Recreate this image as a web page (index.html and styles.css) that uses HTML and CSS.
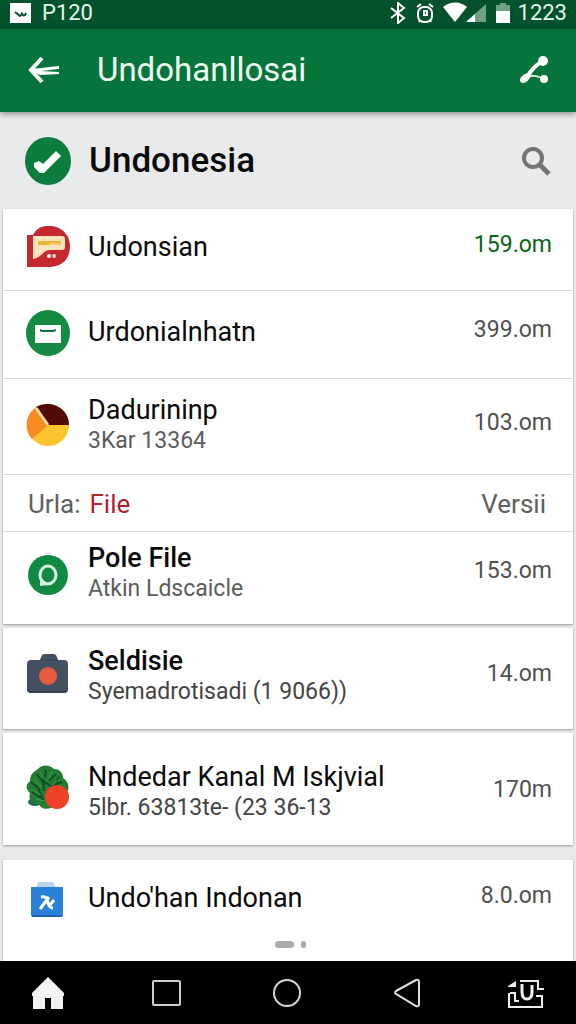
FILE: index.html
```html
<!DOCTYPE html>
<html lang="id">
<head>
<meta charset="utf-8">
<meta name="viewport" content="width=device-width, initial-scale=1">
<title>Undohanllosai</title>
<link rel="stylesheet" href="styles.css">
</head>
<body>
<div class="status">
  <svg class="status-app" viewBox="0 0 21 20" width="21" height="20"><path fill="#fff" d="M0 0h21v20H0z"/><path d="M5 9l5 4 2-2M11 10c2 0 1 4 4 2l1-2" fill="none" stroke="#064d2a" stroke-width="2"/></svg>
  <span class="status-left">P120</span>
  <span class="status-icons">
    <svg viewBox="0 0 16 22" width="16" height="22"><path d="M1 6l13 10-6 5V1l6 5L1 16" fill="none" stroke="#fff" stroke-width="2"/></svg>
    <svg class="alarm" viewBox="0 0 20 22" width="20" height="22"><g fill="none" stroke="#fff" stroke-width="2"><rect x="3" y="5" width="14" height="15" rx="6"/><path d="M2 5l4-3M18 5l-4-3M9 9h3v4H9zM5 18l-1 2M15 18l1 2"/></g></svg>
    <svg viewBox="0 0 45 22" width="45" height="22"><path fill="#fff" d="M1 5c7-6 17-6 24 0L13 20z"/><path fill="#70a080" d="M44 2v18H24z"/><path fill="#fff" d="M33 12v8h-9z"/></svg>
    <svg class="battery" viewBox="0 0 14 20" width="14" height="20"><path fill="#70a080" d="M4 0h6v2h4v6H0V2h4z"/><path fill="#fff" d="M0 8h14v12H0z"/></svg>
  </span>
  <time class="status-time">1223</time>
</div>
<header class="appbar">
  <button class="icon-btn" aria-label="Kembali"><svg viewBox="0 0 34 28" width="34" height="28"><path d="M15 2L4 14l11 12" fill="none" stroke="#fff" stroke-width="4"/><path d="M5 13l27-3v3l-18 2 18 1v2l-19 1-8-4z" fill="#fff"/></svg></button>
  <h1 class="appbar-title">Undohanllosai</h1>
  <button class="icon-btn" aria-label="Bagikan"><svg viewBox="0 0 30 28" width="30" height="28"><path d="M24 5C17 9 12 14 9 20" fill="none" stroke="#fff" stroke-width="4"/><path d="M6 22c6-4 12-2 19 1" fill="none" stroke="#d8efe0" stroke-width="2"/><circle cx="24" cy="5" r="5" fill="#fff"/><circle cx="25" cy="23" r="4" fill="#fff"/><path d="M1 25c-1-3 4-8 9-8l2 3c-2 4-5 7-8 7-2 0-2-1-3-2z" fill="#fff"/></svg></button>
</header>
<section class="heading">
  <svg class="icon" viewBox="0 0 48 48"><ellipse cx="24" cy="24" rx="23" ry="24" fill="#0d7d3d"/><path d="M10 26l5-2 4 3 13-13 5 5-17 17-4 0-6-6z" fill="#fff"/></svg>
  <h2 class="heading-title">Undonesia</h2>
  <button class="icon-btn" aria-label="Cari"><svg viewBox="0 0 30 30" width="30" height="30"><circle cx="12" cy="12" r="9" fill="none" stroke="#757575" stroke-width="4"/><path d="M18 18l10 10" stroke="#757575" stroke-width="5"/></svg></button>
</section>
<main class="list">
  <div class="card">
    <article class="row row-first">
      <svg class="icon" viewBox="0 0 48 48"><path d="M3 12h6c4-8 10-9 16-9 12 0 21 8 21 20 0 13-8 21-21 21H3z" fill="#c62830"/><path d="M9 13h29q3 0 3 3v8q0 3-3 3H26c-7 0-8 8-17 9z" fill="#fbe3bc"/><path d="M14 18h23l-1 4H14z" fill="#ecb431"/><path d="M25 21h10" stroke="#f5cf78" stroke-width="2"/><circle cx="25" cy="33" r="2" fill="#fff"/><circle cx="30" cy="33" r="2" fill="#f3d5d5"/></svg>
      <h3 class="title">Uıdonsian</h3><span class="value value-green">159.om</span>
    </article>
    <article class="row row-second">
      <svg class="icon" viewBox="0 0 48 48"><ellipse cx="24" cy="25" rx="22" ry="23" fill="#158a43"/><path d="M11 17h26v18H11z" fill="#fff"/><path d="M16 22l2 1h11l3-1" fill="none" stroke="#15713a" stroke-width="2"/></svg>
      <h3 class="title">Urdonialnhatn</h3><span class="value">399.om</span>
    </article>
    <article class="row row-chart">
      <svg class="icon" viewBox="0 0 48 48"><circle cx="24" cy="24" r="21" fill="#fcc42c"/><path d="M24 24L8 38C-2 27 3 11 13 6z" fill="#f58c20"/><path d="M24 24L12 6C25-2 45 6 45 24z" fill="#500a0c"/><path d="M24 24L12 7" stroke="#ffd8a0" stroke-width="3"/></svg>
      <div class="text"><h3 class="title">Dadurininp</h3><p class="sub">3Kar 13364</p></div><span class="value">103.om</span>
    </article>
    <div class="section"><span class="section-label">Urla:</span><a class="section-link" href="#file">File</a><span>Versii</span></div>
    <article class="row row-file" id="file">
      <svg class="icon" viewBox="0 0 48 48"><circle cx="24" cy="26" r="20" fill="#108a43"/><ellipse cx="24" cy="26" rx="8" ry="9" fill="none" stroke="#d9f3e2" stroke-width="3"/><path d="M16 27v10l7-1z" fill="#d9f3e2"/></svg>
      <div class="text"><h3 class="title title-strong">Pole File</h3><p class="sub">Atkin Ldscaicle</p></div><span class="value">153.om</span>
    </article>
  </div>
  <article class="card row row-camera">
    <svg class="icon" viewBox="0 0 48 48"><path d="M3 12q0-4 4-4h9l2-5q1-1 3-1h8q2 0 3 1l2 5h6q4 0 4 4v25q0 4-4 4H7q-4 0-4-4z" fill="#435061"/><path d="M16 8h18" stroke="#323e4e" stroke-width="1"/><path d="M4 37q0 3 4 3h31q4 0 4-3" fill="none" stroke="#354151" stroke-width="2"/><circle cx="24" cy="24" r="9" fill="#e85c40"/></svg>
    <div class="text"><h3 class="title title-strong">Seldisie</h3><p class="sub sub-dark">Syemadrotisadi (1 9066))</p></div><span class="value">14.om</span>
  </article>
  <article class="card row row-plant">
    <svg class="icon icon-plant" viewBox="0 3 48 48"><ellipse cx="11" cy="37" rx="7" ry="4" fill="#22674f"/><path d="M14 4c5-5 12-4 16 0 6 0 9 4 9 9 7 4 7 13 2 17L27 43c-6 2-11 0-12-4-8 0-11-5-9-11-5-4-4-9 0-12 0-6 3-9 8-12z" fill="#247c35"/><g fill="none" stroke="#125126" stroke-width="2"><path d="M13 9l8 11M22 5l-2 11 8 6M32 9l-7 7M7 17l9 8M38 17l-10 4M8 27l9 6M15 25l5 12M19 18l1 8M35 12l-5 10"/></g><g fill="none" stroke="#43a148" stroke-width="1"><path d="M16 7l7 10M28 6l-3 7M9 14l9 8M36 14l-8 6M7 24l10 6M12 34l9 2"/></g><circle cx="33" cy="32" r="12" fill="#ee4329"/></svg>
    <div class="text"><h3 class="title">Nndedar Kanal M Iskjvial</h3><p class="sub sub-dark">5lbr. 63813te- (23 36-13</p></div><span class="value">170m</span>
  </article>
  <div class="card card-last">
    <article class="row row-last">
      <svg class="icon" viewBox="0 0 48 48"><path d="M12 14l2-6h15l3 6z" fill="#b9d4ec"/><path d="M7 13h32v28q0 2-2 2H9q-2 0-2-2z" fill="#2b80d8"/><path d="M8 42h30" stroke="#1b62b4" stroke-width="2"/><path d="M17 23c6-1 6 2 7 6s2 5 5 5M25 23l-9 12M30 26l-4 5" fill="none" stroke="#fff" stroke-width="3"/></svg>
      <h3 class="title">Undo'han Indonan</h3><span class="value">8.0.om</span>
    </article>
    <div class="pager" aria-hidden="true"><i class="pill"></i><i class="dot"></i></div>
  </div>
</main>
<nav class="nav">
  <button class="icon-btn" aria-label="Beranda"><svg viewBox="0 0 34 34" width="34" height="34"><path fill="#f2f2f2" d="M17 1l16 16v3h-1v13H20V22h-6v11H2V20H1v-3z"/></svg></button>
  <button class="icon-btn" aria-label="Terbaru"><svg viewBox="0 0 34 34" width="34" height="34"><rect x="3" y="5" width="27" height="24" rx="1" fill="none" stroke="#ccc" stroke-width="2"/></svg></button>
  <button class="icon-btn" aria-label="Layar utama"><svg viewBox="0 0 34 34" width="34" height="34"><circle cx="18" cy="17" r="13" fill="none" stroke="#d5d5d5" stroke-width="2"/></svg></button>
  <button class="icon-btn" aria-label="Mundur"><svg viewBox="0 0 34 34" width="34" height="34"><path d="M8 15L28 4q3-1 3 2v22q0 3-3 2L8 18q-2-1 0-3z" fill="none" stroke="#e0e0e0" stroke-width="2"/></svg></button>
  <button class="icon-btn" aria-label="Papan ketik"><svg viewBox="0 0 38 34" width="38" height="34"><g fill="none" stroke="#eee" stroke-width="2"><path d="M13 5h18v8h6M2 17v14h33V20h-6M3 17h5v8h4M31 13h6"/><path d="M15 8v8q0 7 5 7t5-7V9" stroke-width="3"/></g><path fill="#eee" d="M1 10l8-5v6H1z"/></svg></button>
</nav>
</body>
</html>
```

FILE: styles.css
```css
* { box-sizing: border-box; }
body {
  margin: 0;
  min-height: 100vh;
  display: flex;
  flex-direction: column;
  background: #e9eaec;
  color: #0a0a0a;
  font-family: Roboto, "Liberation Sans", sans-serif;
}
h1, h2, h3, p { margin: 0; font-weight: 400; }
svg { display: block; flex: none; }
.icon-btn { display: flex; padding: 0; border: 0; background: none; }

.status {
  display: flex;
  align-items: center;
  padding: 0 9px 4px 10px;
  background: #04522b;
  color: #e3f5e9;
  font-size: 22px;
  line-height: 25px;
}
.status-left { margin-left: 11px; }
.status-icons { display: flex; align-items: center; margin-left: auto; }
.alarm { margin: 0 7px 0 9px; }
.battery { margin: 0 8px 0 9px; }

.appbar {
  position: relative;
  display: flex;
  align-items: center;
  padding: 20px 27px 21px;
  background: #07743b;
  color: #effff4;
  box-shadow: 0 2px 6px rgba(0, 0, 0, 0.4);
}
.appbar-title { flex: 1; margin-left: 36px; font-size: 33px; line-height: 42px; }

.heading { display: flex; align-items: center; padding: 25px 25px 24px 24px; }
.heading-title { flex: 1; margin-left: 17px; font-size: 35px; line-height: 48px; font-weight: 500; }

.list { flex: 1; display: flex; flex-direction: column; gap: 4px; padding: 0 3px; }
.card { background: #fff; box-shadow: 0 1px 2px rgba(0, 0, 0, 0.35); }
.icon { width: 48px; height: 48px; }
.icon-plant { overflow: visible; }
.row {
  display: grid;
  grid-template-columns: 48px 1fr auto;
  column-gap: 16px;
  align-items: center;
  padding: 14px 21px 19px;
}
.row-first, .row-second, .row-chart, .section { border-bottom: 1px solid #dadcdd; }
.row-second { padding-top: 17px; padding-bottom: 22px; }
.row-chart { padding-top: 15px; padding-bottom: 18px; }
.row-file { padding-top: 10px; padding-bottom: 20px; }
.row-camera { padding-top: 17px; padding-bottom: 22px; }
.row-plant { padding-top: 28px; padding-bottom: 22px; }
.title { font-size: 27px; line-height: 32px; }
.title-strong { font-weight: 500; }
.sub { font-size: 23px; line-height: 30px; color: #5c5c5c; }
.sub-dark { color: #444; }
.value { padding-bottom: 4px; font-size: 23px; line-height: 30px; color: #505050; }
.value-green { color: #0a6415; }

.section {
  display: flex;
  gap: 9px;
  padding: 14px 27px 12px 25px;
  font-size: 26px;
  line-height: 30px;
  color: #606060;
}
.section-link { flex: 1; color: #b51f2d; text-decoration: none; }

.card-last { flex: 1; margin-top: 11px; }
.pager {
  display: flex;
  align-items: center;
  justify-content: center;
  gap: 7px;
  padding: 0 0 12px 5px;
}
.pill { width: 19px; height: 7px; border-radius: 4px; background: #aaa; }
.dot { width: 5px; height: 7px; border-radius: 3px; background: #aaa; }

.nav {
  display: flex;
  justify-content: space-between;
  padding: 15px 31px 14px;
  background: #000;
}
```
